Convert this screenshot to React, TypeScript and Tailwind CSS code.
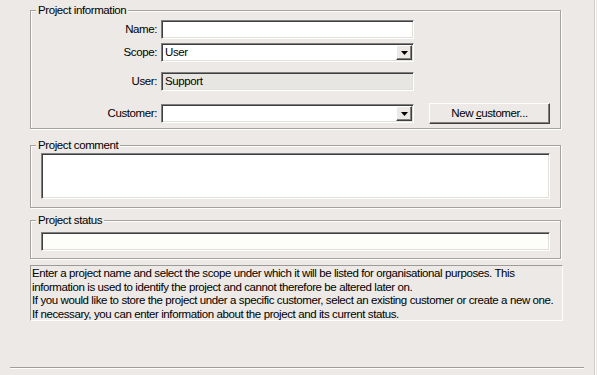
import React from "react";

const sunken =
  "border border-t-[#7f7f7f] border-l-[#7f7f7f] border-b-white border-r-white shadow-[inset_1px_1px_0_#3f3f3f,inset_-1px_-1px_0_#e2e0db]";
const raised =
  "border border-t-white border-l-white border-b-[#404040] border-r-[#404040] shadow-[inset_-1px_-1px_0_#808080]";
const group =
  "border border-[#a4a29d] shadow-[1px_1px_0_#fff,inset_1px_1px_0_#fff] px-0 m-0";

function Legend({ children }: { children: React.ReactNode }) {
  return (
    <legend className="ml-[5px] px-[2px] leading-[13px] bg-[#ece9e6]">{children}</legend>
  );
}

function DropArrow() {
  return (
    <div className={`w-[16px] h-full flex items-center justify-center bg-[#ece9e6] ${raised}`}>
      <svg width="7" height="4" viewBox="0 0 7 4">
        <path d="M0 0h7L3.5 4z" fill="#000" />
      </svg>
    </div>
  );
}

function Select({ value }: { value?: string }) {
  return (
    <div className={`w-[253px] h-[19px] bg-white flex items-stretch p-[1px] ${sunken}`}>
      <div className="flex-1 pl-[2px] leading-[15px]">{value}</div>
      <DropArrow />
    </div>
  );
}

function Row({ label, children, className = "" }: { label: string; children: React.ReactNode; className?: string }) {
  return (
    <div className={`flex items-center ${className}`}>
      <div className="w-[127px] text-right pr-[1px]">{label}</div>
      <div className="ml-[3px] flex items-center">{children}</div>
    </div>
  );
}

export default function App() {
  return (
    <div className="w-[597px] h-[375px] bg-[#ece9e6] flex overflow-hidden text-black text-[11.5px] tracking-[-0.4px] leading-[13px] font-['Liberation_Sans',Arial,sans-serif]">
      <div className="w-[594px] flex flex-col pt-[4px]">
        {/* Project information */}
        <fieldset className={`ml-[30px] w-[531px] pb-[4px] ${group}`}>
          <Legend>Project information</Legend>
          <Row label="Name:" className="mt-[3px]">
            <div className={`w-[253px] h-[19px] bg-white ${sunken}`} />
          </Row>
          <Row label="Scope:" className="mt-[4px]">
            <Select value="User" />
          </Row>
          <Row label="User:" className="mt-[10px]">
            <div className={`w-[253px] h-[19px] bg-[#e8e6e2] pl-[3px] leading-[17px] ${sunken}`}>Support</div>
          </Row>
          <Row label="Customer:" className="mt-[12px]">
            <Select />
            <button className={`ml-[15px] w-[121px] h-[21px] bg-[#ece9e6] text-center leading-[19px] ${raised}`}>
              New <span className="underline">c</span>ustomer...
            </button>
          </Row>
        </fieldset>

        {/* Project comment */}
        <fieldset className={`ml-[30px] mt-[10px] w-[531px] pb-[8px] ${group}`}>
          <Legend>Project comment</Legend>
          <div className={`ml-[10px] mt-[1px] w-[509px] h-[46px] bg-white ${sunken}`} />
        </fieldset>

        {/* Project status */}
        <fieldset className={`ml-[30px] mt-[6px] w-[531px] pb-[7px] ${group}`}>
          <Legend>Project status</Legend>
          <div className={`ml-[10px] mt-[5px] w-[509px] h-[19px] bg-[#fdfdfa] ${sunken}`} />
        </fieldset>

        {/* Help text */}
        <div className="ml-[30px] mt-[6px] w-[533px] h-[56px] border border-t-[#9d9b97] border-l-[#9d9b97] border-b-white border-r-white pl-[1px] pt-[1px] leading-[13.5px] whitespace-nowrap">
          <div>Enter a project name and select the scope under which it will be listed for organisational purposes. This</div>
          <div>information is used to identify the project and cannot therefore be altered later on.</div>
          <div>If you would like to store the project under a specific customer, select an existing customer or create a new one.</div>
          <div>If necessary, you can enter information about the project and its current status.</div>
        </div>

        {/* Separator */}
        <div className="ml-[10px] mt-[46px] w-[574px] h-[2px] border-t border-t-[#a09e9a] border-b border-b-white" />
      </div>
      <div className="w-[1px] h-full bg-[#cfcdc8]" />
      <div className="w-[1px] h-full bg-white" />
    </div>
  );
}
